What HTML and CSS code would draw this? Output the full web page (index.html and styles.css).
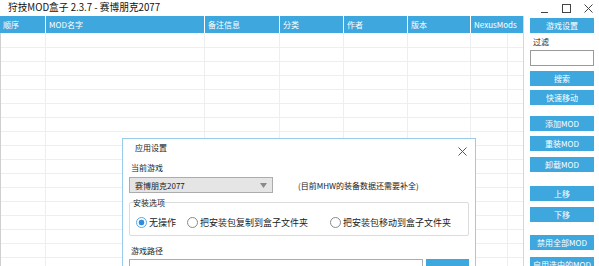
FILE: index.html
```html
<!DOCTYPE html>
<html lang="zh-CN">
  <head>
    <meta charset="UTF-8" />
    <title>狩技MOD盒子</title>
    <link rel="stylesheet" href="styles.css">
  </head>
  <body>
    <div class="window">
      <div class="titlebar">
        <span class="title">狩技MOD盒子 2.3.7 - 赛博朋克2077</span>
        <div class="controls">
          <svg class="ctl" width="9" height="9" viewBox="0 0 9 9"><path d="M1 8.5h7" stroke="#444" stroke-width="1"/></svg>
          <svg class="ctl" width="9" height="9" viewBox="0 0 9 9"><rect x="0.5" y="0.5" width="8" height="8" fill="none" stroke="#444" stroke-width="1"/></svg>
          <svg class="ctl" width="9" height="9" viewBox="0 0 9 9"><path d="M0.5 0.5l8 8M8.5 0.5l-8 8" stroke="#444" stroke-width="1"/></svg>
        </div>
      </div>

      <div class="main">
        <div class="grid">
          <div class="grid-head">
            <div class="col c1">顺序</div>
            <div class="col c2">MOD名字</div>
            <div class="col c3">备注信息</div>
            <div class="col c4">分类</div>
            <div class="col c5">作者</div>
            <div class="col c6">版本</div>
            <div class="col c7">NexusMods</div>
          </div>
          <div class="grid-body">
            <div class="gcol c1"></div>
            <div class="gcol c2"></div>
            <div class="gcol c3"></div>
            <div class="gcol c4"></div>
            <div class="gcol c5"></div>
            <div class="gcol c6"></div>
            <div class="gcol c7a"></div>
            <div class="gcol c7b"></div>
          </div>
        </div>

        <div class="side">
          <button class="btn">游戏设置</button>
          <div class="side-label">过滤</div>
          <input class="filter" type="text" />
          <button class="btn sp5">搜索</button>
          <button class="btn sp4">快速移动</button>
          <button class="btn sp11">添加MOD</button>
          <button class="btn sp5">重装MOD</button>
          <button class="btn sp6">卸载MOD</button>
          <button class="btn sp14">上移</button>
          <button class="btn sp6">下移</button>
          <button class="btn sp13">禁用全部MOD</button>
          <button class="btn sp7">启用选中的MOD</button>
        </div>
      </div>

      <div class="dialog">
        <div class="dlg-head">
          <span class="dlg-title">应用设置</span>
          <svg class="dlg-close" width="9" height="9" viewBox="0 0 9 9"><path d="M0.5 0.5l8 8M8.5 0.5l-8 8" stroke="#555" stroke-width="1"/></svg>
        </div>
        <div class="dlg-body">
          <div class="label">当前游戏</div>
          <div class="game-row">
            <div class="select">
              <span>赛博朋克2077</span>
              <svg width="7" height="5" viewBox="0 0 7 5"><path d="M0 0h7L3.5 5z" fill="#8a8a8a"/></svg>
            </div>
            <span class="hint">(目前MHW的装备数据还需要补全)</span>
          </div>

          <fieldset class="group">
            <legend>安装选项</legend>
            <div class="radios">
              <label class="radio r1"><span class="dot checked"></span>无操作</label>
              <label class="radio r2"><span class="dot"></span>把安装包复制到盒子文件夹</label>
              <label class="radio"><span class="dot"></span>把安装包移动到盒子文件夹</label>
            </div>
          </fieldset>

          <div class="label path-label">游戏路径</div>
          <div class="path-row">
            <input class="path" type="text" />
            <button class="browse">浏览</button>
          </div>
        </div>
      </div>
    </div>
  </body>
</html>
```

FILE: styles.css
```css
html,
body {
  margin: 0;
  padding: 0;
  background: #ffffff;
}
body {
  font-family: "Noto Sans CJK SC", "Noto Sans", sans-serif;
  color: #222222;
  width: 599px;
  height: 266px;
  overflow: hidden;
}

.window {
  position: relative;
  width: 599px;
  height: 266px;
  overflow: hidden;
}

.titlebar {
  height: 16px;
  display: flex;
  align-items: flex-start;
  justify-content: space-between;
}
.title {
  font-size: 9.7px;
  line-height: 14px;
  margin-left: 8px;
  color: #111111;
}
.controls {
  display: flex;
  gap: 13px;
  margin-top: 4px;
  margin-right: 6px;
}
.ctl {
  display: block;
}

.main {
  display: flex;
  height: 250px;
}

/* grid */
.grid {
  width: 523px;
  display: flex;
  flex-direction: column;
  border-right: 1px solid #d6d6d6;
}
.grid-head {
  height: 17px;
  display: flex;
  background: #3ea8de;
  color: #ffffff;
  font-size: 8px;
  line-height: 17px;
}
.col {
  padding-left: 3px;
  box-sizing: border-box;
  border-left: 1px solid #ffffff;
  white-space: nowrap;
}
.grid-head .c1 {
  border-left: 0;
}
.c1 { width: 45px; }
.c2 { width: 159px; }
.c3 { width: 75px; }
.c4 { width: 64px; }
.c5 { width: 64px; }
.c6 { width: 63px; }
.c7 { width: 53px; }
.c7a { width: 37px; }
.c7b { width: 16px; }

.grid-body {
  flex: 1;
  display: flex;
  border-left: 1px solid #cfcfcf;
  background: repeating-linear-gradient(to bottom, transparent 0 13px, #eeeeee 13px 14px);
  background-position: 0 1px;
}
.gcol {
  box-sizing: border-box;
  border-left: 1px solid #eeeeee;
}
.grid-body .c1 {
  width: 44px;
  border-left: 0;
}

/* side panel */
.side {
  width: 75px;
  padding-left: 6px;
  box-sizing: border-box;
  display: flex;
  flex-direction: column;
  align-items: flex-start;
}
.btn {
  width: 64px;
  height: 15px;
  border: 0;
  padding: 0;
  margin: 2px 0 0;
  background: #3ea8de;
  color: #ffffff;
  font-family: "Noto Sans CJK SC", "Noto Sans", sans-serif;
  font-size: 8px;
  line-height: 15px;
  flex-shrink: 0;
}
.sp4 { margin-top: 4px; }
.sp5 { margin-top: 5px; }
.sp6 { margin-top: 6px; }
.sp7 { margin-top: 7px; }
.sp11 { margin-top: 11px; }
.sp13 { margin-top: 13px; }
.sp14 { margin-top: 14px; }
.side-label {
  font-size: 8px;
  line-height: 12px;
  margin: 3px 0 0 3px;
}
.filter {
  width: 64px;
  height: 16px;
  margin: 2px 0 0;
  box-sizing: border-box;
  border: 1px solid #9a9a9a;
  padding: 0;
}

/* dialog */
.dialog {
  position: absolute;
  left: 122px;
  top: 138px;
  width: 354px;
  height: 160px;
  box-sizing: border-box;
  background: #ffffff;
  border: 1px solid #98cdea;
}
.dlg-head {
  height: 19px;
  display: flex;
  justify-content: space-between;
  align-items: flex-start;
  padding: 0 8px 0 12px;
}
.dlg-title {
  font-size: 8px;
  line-height: 12px;
  margin-top: 3px;
}
.dlg-close {
  margin-top: 8px;
}
.dlg-body {
  padding: 0 6px;
}
.label {
  font-size: 8px;
  line-height: 12px;
  margin: 4px 0 0 2px;
}
.game-row {
  display: flex;
  align-items: center;
  margin-top: 3px;
}
.select {
  width: 144px;
  height: 16px;
  box-sizing: border-box;
  background: #e5e5e5;
  border: 1px solid #acacac;
  display: flex;
  align-items: center;
  justify-content: space-between;
  padding: 0 5px 0 5px;
  font-size: 8px;
}
.hint {
  font-size: 8px;
  margin-left: 25px;
  margin-top: 1px;
}

.group {
  margin: 4px 0 0;
  padding: 0 3px 5px;
  border: 1px solid #dcdcdc;
  border-radius: 2px;
}
.group legend {
  font-size: 8px;
  line-height: 11px;
  padding: 0;
}
.radios {
  display: flex;
  align-items: center;
  height: 16px;
  margin-top: 6px;
  font-size: 9px;
  padding-left: 3px;
}
.radio {
  display: flex;
  align-items: center;
  gap: 2px;
  white-space: nowrap;
}
.r1 { width: 51px; }
.r2 { width: 143px; }
.dot {
  width: 11px;
  height: 11px;
  box-sizing: border-box;
  border-radius: 50%;
  border: 1px solid #8a8a8a;
  background: #ffffff;
}
.dot.checked {
  border-color: #5aa7e0;
  background: radial-gradient(circle, #2f8ddb 0 2.6px, #ffffff 3.2px);
}

.path-label {
  margin-top: 9px;
}
.path-row {
  display: flex;
  margin-top: 2px;
  gap: 3px;
}
.path {
  width: 294px;
  height: 22px;
  box-sizing: border-box;
  border: 1px solid #adadad;
  padding: 0;
}
.browse {
  width: 43px;
  height: 24px;
  border: 0;
  padding: 0;
  background: #3ea8de;
  color: #ffffff;
  font-size: 8px;
  line-height: 24px;
  font-family: "Noto Sans CJK SC", "Noto Sans", sans-serif;
}
```
